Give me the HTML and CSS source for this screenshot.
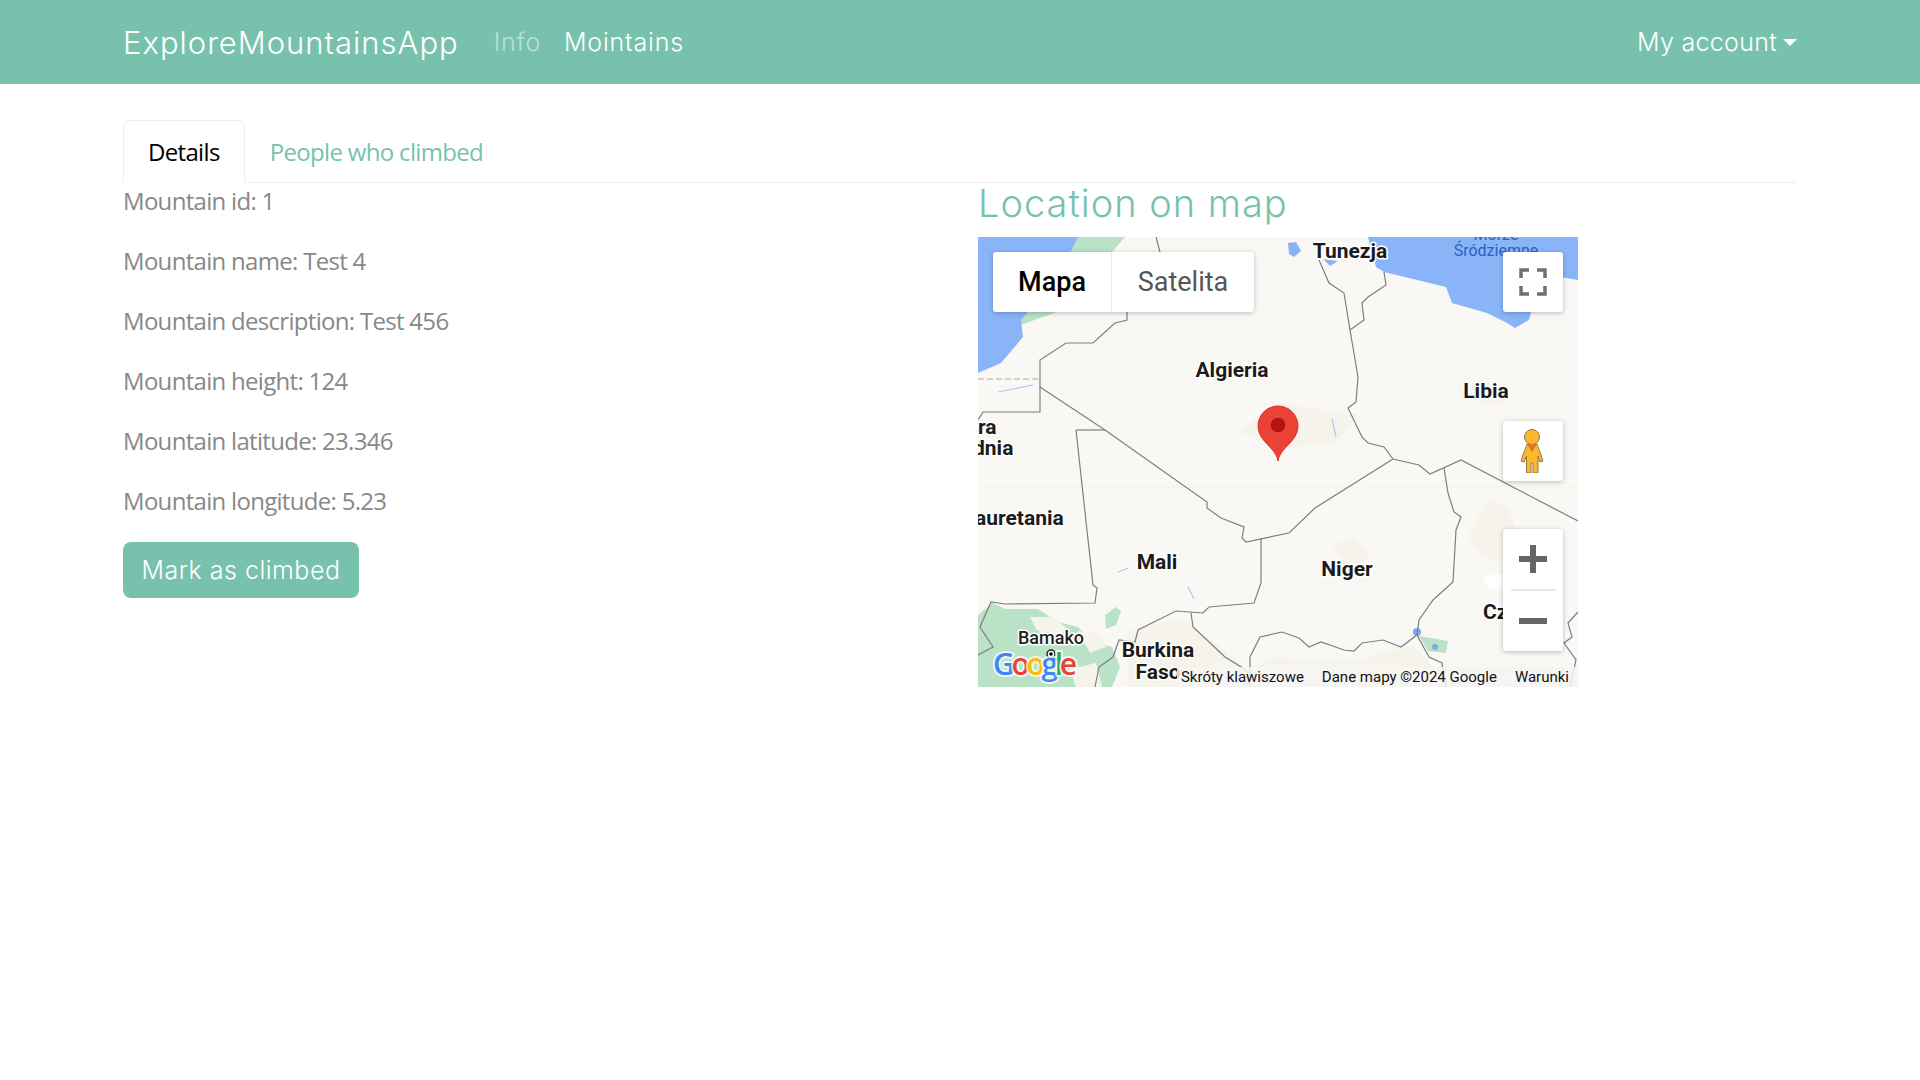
FILE: index.html
```html
<!DOCTYPE html>
<html lang="en">
<head>
<meta charset="utf-8">
<title>ExploreMountainsApp</title>
<link rel="stylesheet" href="styles.css">
</head>
<body>
<nav class="navbar">
  <a class="brand">ExploreMountainsApp</a>
  <a class="nav-link muted">Info</a>
  <a class="nav-link">Mointains</a>
  <a class="nav-link account">My account<span class="caret"></span></a>
</nav>
<main class="page">
  <div class="tabs">
    <a class="tab active">Details</a>
    <a class="tab">People who climbed</a>
  </div>
  <div class="columns">
    <section class="details">
      <p>Mountain id: 1</p>
      <p>Mountain name: Test 4</p>
      <p>Mountain description: Test 456</p>
      <p>Mountain height: 124</p>
      <p>Mountain latitude: 23.346</p>
      <p>Mountain longitude: 5.23</p>
      <button class="climb">Mark as climbed</button>
    </section>
    <section class="location">
      <h2>Location on map</h2>
      <div class="map">
        <svg class="map-canvas" viewBox="0 0 600 450" width="600" height="450" xmlns="http://www.w3.org/2000/svg">
          <rect class="land" width="600" height="450"/>
          <path class="green" d="M100 0L147 0L133 16L118 30L104 60L76 76L43 88L40 80L70 40Z"/>
          <path class="sand" d="M95 55L130 40L125 65L100 72Z"/>
          <path class="green" d="M0 378L14 366L27 372L60 372L80 385L100 390L115 405L134 410L142 430L134 450L0 450Z"/>
          <path class="green" d="M127 378L138 370L143 374L138 388L128 392Z"/>
          <path class="sand" d="M52 380L75 380L92 394L70 400L58 392Z"/>
          <path class="sand" d="M100 394L122 397L128 410L112 416Z"/>
          <path class="sand" d="M92 432L118 426L124 450L98 450Z"/>
          <path class="sand" d="M150 395L200 380L240 408L268 432L275 450L150 450Z"/>
          <path class="green" d="M441 399L470 404L468 416L450 414Z"/>
          <path class="sand" d="M272 430L300 420L370 425L436 408L455 430L480 450L272 450Z"/>
          <path class="sand" d="M490 300L510 262L530 272L545 310L520 325L500 315Z"/>
          <path class="sand" d="M262 195L300 165L340 172L380 178L360 205L300 212Z"/>
          <path class="sand" d="M494 150L515 145L530 165L505 170Z"/>
          <path class="sand" d="M355 308L375 300L392 320L370 335Z"/>
          <path class="white-patch" d="M505 340L530 335L545 350L510 352Z"/>
          <path class="sea" d="M0 0L100 0L80 40L43 83L45 100L23 126L0 136Z"/>
          <path class="sea" d="M390 0L398 30L406 35L431 41L468 50L474 66L509 76L529 86L537 91L551 83L553 75L570 68L582 40L600 43L600 0Z"/>
          <path class="sea" d="M310 6L318 5L323 14L316 20L311 17Z"/>
          <path class="sea" d="M345 22L360 24L352 29Z"/>
          <circle class="lake" cx="439" cy="395" r="4"/>
          <circle class="lake" cx="457" cy="410" r="3"/>
          <path class="river" d="M20 155L55 148"/>
          <path class="river" d="M354 182L358 200"/>
          <path class="river" d="M140 335L150 331"/>
          <path class="river" d="M210 350L216 362"/>
          <path class="seam" d="M0 250H600"/>
          <path class="border dashed" d="M0 142H62"/>
          <path class="border" d="M178 0L182 15L182 30"/>
          <path class="border" d="M149 75L149 83L137 86L115 106L88 106L62 123L62 175L5 175L0 183"/>
          <path class="border" d="M62 150L127 193L229 265L229 271L243 281L266 290L264 301L268 305L311 296L337 271L415 222"/>
          <path class="border" d="M98 193L127 193"/>
          <path class="border" d="M98 193L115 348L119 351L117 366L27 367L13 365L2 390L15 410L0 418"/>
          <path class="border" d="M283 301L283 346L276 366L231 370L225 376L198 374L160 393L157 405L141 403L135 420L121 430L117 450"/>
          <path class="border" d="M213 376L215 390L229 403L247 420L268 433L272 450"/>
          <path class="border" d="M272 450L272 420L282 400L304 395L321 401L331 410L343 405L366 413L376 414L384 406L405 403L423 410L439 398L451 420L464 426L468 450"/>
          <path class="border" d="M466 231L470 256L476 275L483 280L478 293L475 345L455 363L441 383L439 398"/>
          <path class="border" d="M415 222L441 228L452 237L483 223L600 284"/>
          <path class="border" d="M341 23L351 46L366 56L372 93L380 140L378 165L370 171L384 200L390 206L406 210L415 222"/>
          <path class="border" d="M406 35L408 48L390 60L384 66L386 83L372 93"/>
          <path class="border" d="M600 375L590 386L594 400L586 406L598 423L592 450"/>
          <text class="sea-label" x="518" y="3" text-anchor="middle">Morze</text>
          <text class="sea-label" x="518" y="19" text-anchor="middle">Śródziemne</text>
          <text class="label" x="372" y="21" text-anchor="middle">Tunezja</text>
          <text class="label" x="254" y="140" text-anchor="middle">Algieria</text>
          <text class="label" x="508" y="161" text-anchor="middle">Libia</text>
          <text class="label" x="0" y="197">ra</text>
          <text class="label" x="-5" y="218">dnia</text>
          <text class="label" x="-3" y="288">auretania</text>
          <text class="label" x="179" y="332" text-anchor="middle">Mali</text>
          <text class="label" x="369" y="339" text-anchor="middle">Niger</text>
          <text class="label" x="505" y="382">Cz</text>
          <text class="city" x="73" y="407" text-anchor="middle">Bamako</text>
          <circle class="city-dot" cx="73" cy="417" r="4"/>
          <circle cx="73" cy="417" r="1.8"/>
          <text class="label" x="180" y="420" text-anchor="middle">Burkina</text>
          <text class="label" x="180" y="442" text-anchor="middle">Faso</text>
          <text class="logo" x="15" y="438" textLength="84"><tspan class="g-blue">G</tspan><tspan class="g-red">o</tspan><tspan class="g-yellow">o</tspan><tspan class="g-blue">g</tspan><tspan class="g-green">l</tspan><tspan class="g-red">e</tspan></text>
          <path class="pin" d="M300 224C298 210 280 205 280 189A20 20 0 0 1 320 189C320 205 302 210 300 224Z"/>
          <circle class="pin-dot" cx="300" cy="188" r="7.3"/>
        </svg>
        <div class="map-type ctl">
          <span class="type on">Mapa</span>
          <span class="type off">Satelita</span>
        </div>
        <div class="ctl fullscreen">
          <svg viewBox="0 0 28 28" width="28" height="28"><path class="icon-line" d="M2 10V2H10M18 2H26V10M26 18V26H18M10 26H2V18"/></svg>
        </div>
        <div class="ctl pegman">
          <svg viewBox="0 0 28 44" width="28" height="44">
            <path class="peg" d="M8 15L3 29L2 32L5 33L7.500 27L7.500 44H12V34H14V44H19V27L21 33L24 32L23 29L18 15Z"/>
            <circle class="peg" cx="13" cy="8" r="7.500"/>
            <path class="scarf" d="M8 15L18 15L13 23Z"/>
          </svg>
        </div>
        <div class="ctl zoom">
          <button class="zoom-btn"><svg viewBox="0 0 28 28" width="28" height="28"><path class="icon-bar" d="M0 11H11V0H17V11H28V17H17V28H11V17H0Z"/></svg></button>
          <div class="zoom-sep"></div>
          <button class="zoom-btn"><svg viewBox="0 0 28 28" width="28" height="28"><path class="icon-bar" d="M0 11H28V17H0Z"/></svg></button>
        </div>
        <div class="attribution">
          <span>Skróty klawiszowe</span>
          <span>Dane mapy ©2024 Google</span>
          <span>Warunki</span>
        </div>
      </div>
    </section>
  </div>
</main>
</body>
</html>
```

FILE: styles.css
```css
* { box-sizing: border-box; }
html, body { margin: 0; padding: 0; background: #fff; }
body { font-family: "Open Sans", "Noto Sans", sans-serif; font-size: 24px; line-height: 36px; color: #888; }

.navbar { height: 84px; background: #78c2ad; padding: 0 123px; display: flex; align-items: center; font-family: Inter, sans-serif; color: #fff; }
.brand { font-size: 31px; line-height: 45px; font-weight: 300; letter-spacing: 1px; margin-right: 35px; }
.nav-link { font-size: 25px; font-weight: 300; letter-spacing: 0.8px; margin-right: 23px; }
.nav-link.muted { color: rgba(255,255,255,.5); }
.nav-link.account { margin: 0 0 0 auto; display: flex; align-items: center; letter-spacing: 0.3px; }
.caret { width: 0; height: 0; margin-left: 6px; border: 7px solid transparent; border-top-color: #fff; border-bottom: 0; }

.page { padding: 36px 123px 0; }
.tabs { display: flex; border-bottom: 1px solid #eee; height: 63px; }
.tab { padding: 13px 24px 11px; height: 63px; color: #78c2ad; border: 1px solid transparent; border-radius: 8px 8px 0 0; letter-spacing: -0.67px; }
.tab.active { color: #000; background: #fff; border-color: #eee #eee #fff; }

.columns { display: grid; grid-template-columns: 1fr 1fr; column-gap: 36px; }
.details p { margin: 0 0 24px; letter-spacing: -0.7px; }
.climb { display: block; width: 236px; height: 56px; margin-top: -1px; padding: 0; border: 0; border-radius: 8px; background: #78c2ad; color: #fff; font-family: Inter, sans-serif; font-size: 25px; font-weight: 300; letter-spacing: 0.5px; }

.location h2 { margin: -1px 0 12px; color: #78c2ad; font-family: Inter, sans-serif; font-size: 38px; line-height: 43px; font-weight: 300; letter-spacing: 1px; }
.map { position: relative; width: 600px; height: 450px; overflow: hidden; background: #faf8f4; font-family: Roboto, sans-serif; }
.map-canvas { display: block; }

.land { fill: #faf8f4; }
.sea { fill: #8ab4f8; }
.lake { fill: #7fa9ec; }
.green { fill: #b9e2c6; }
.sand { fill: #f5f3ea; }
.white-patch { fill: #fff; }
.river { fill: none; stroke: #a9c8fb; stroke-width: 1.2; }
.seam { stroke: #f4f2ec; stroke-width: 1; }
.border { fill: none; stroke: #7c7f80; stroke-width: 1.2; }
.border.dashed { stroke-dasharray: 6 3; stroke: #a9a9a6; }
.label { font-family: Roboto, sans-serif; font-weight: 700; font-size: 21px; fill: #1b1b1b; stroke: #fff; stroke-width: 3px; paint-order: stroke; stroke-linejoin: round; }
.city { font-family: Roboto, sans-serif; font-weight: 500; font-size: 18px; fill: #222; stroke: #fff; stroke-width: 3px; paint-order: stroke; stroke-linejoin: round; }
.city-dot { fill: #fff; stroke: #222; stroke-width: 1.5; }
.sea-label { font-family: Roboto, sans-serif; font-size: 16px; fill: #2b62c0; }
.logo { font-family: "Open Sans", sans-serif; font-weight: 600; font-size: 30px; stroke: #fff; stroke-opacity: .75; stroke-width: 4px; paint-order: stroke; stroke-linejoin: round; }
.g-blue { fill: #4285f4; }
.g-red { fill: #ea4335; }
.g-yellow { fill: #fbbc05; }
.g-green { fill: #34a853; }
.pin { fill: #ea4335; stroke: #da3327; stroke-width: 1; }
.pin-dot { fill: #b31412; }

.ctl { position: absolute; background: #fff; border-radius: 3px; box-shadow: 0 1px 5px rgba(0,0,0,.25); display: flex; align-items: center; justify-content: center; }
.map-type { left: 15px; top: 15px; height: 60px; }
.type { height: 60px; display: flex; align-items: center; justify-content: center; font-size: 27px; color: #565656; }
.type.on { width: 119px; color: #000; font-weight: 500; border-right: 1px solid #eee; }
.type.off { width: 142px; }
.fullscreen { left: 525px; top: 15px; width: 60px; height: 60px; }
.pegman { left: 525px; top: 184px; width: 60px; height: 60px; }
.zoom { left: 525px; top: 292px; width: 60px; height: 122px; flex-direction: column; justify-content: flex-start; }
.zoom-btn { width: 60px; height: 60px; padding: 0; border: 0; background: none; display: flex; align-items: center; justify-content: center; }
.zoom-sep { width: 45px; height: 2px; background: #e6e6e6; }
.icon-line { fill: none; stroke: #707070; stroke-width: 3.5; }
.icon-bar { fill: #666; }
.peg { fill: #fdb82b; stroke: #8a7a55; stroke-width: 1; }
.scarf { fill: #d9792a; }

.attribution { position: absolute; right: 0; bottom: 0; height: 20px; display: flex; align-items: center; background: rgba(245,245,245,.85); padding: 0 9px 0 4px; font-size: 15px; line-height: 20px; color: #111; gap: 18px; white-space: nowrap; }
```
